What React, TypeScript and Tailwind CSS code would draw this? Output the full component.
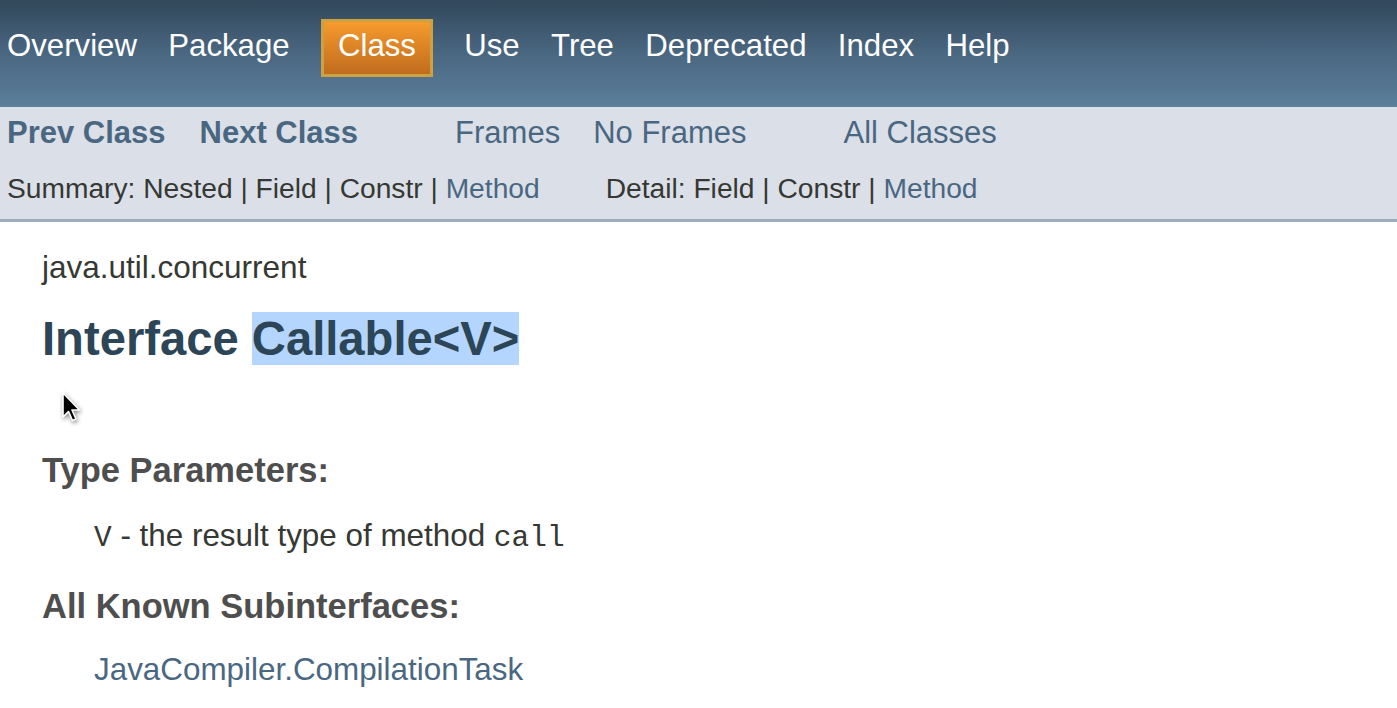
const TOP_NAV = ["Overview", "Package", "Class", "Use", "Tree", "Deprecated", "Index", "Help"];

const mono = { fontFamily: '"Liberation Mono", "DejaVu Sans Mono", monospace' };

function Cursor() {
  return (
    <svg
      className="absolute left-[60px] top-[390px]"
      width="24"
      height="34"
      viewBox="0 0 24 34"
      style={{ filter: "drop-shadow(1px 2px 2px rgba(0,0,0,0.45))" }}
    >
      <path
        d="M3 3 L3 27 L8.5 21.5 L12.5 30.5 L16 29 L12 20 L19.5 20 Z"
        fill="#000"
        stroke="#fff"
        strokeWidth="1.6"
        strokeLinejoin="round"
      />
    </svg>
  );
}

function TopNav() {
  return (
    <div className="h-[107px] bg-gradient-to-b from-[#32485b] via-[#4a6781] to-[#5b7f9b]">
      <ul className="flex items-start gap-[31.3px] pl-[7px] pt-[22px] text-[31.2px] leading-[48px] text-white">
        {TOP_NAV.map((item) =>
          item === "Class" ? (
            <li
              key={item}
              className="-mt-[3px] border-[3px] border-[#cda140] bg-gradient-to-b from-[#f69b2d] to-[#c06c1f] px-[14px] pb-[4px]"
            >
              {item}
            </li>
          ) : (
            <li key={item}>{item}</li>
          )
        )}
      </ul>
    </div>
  );
}

function SubNav() {
  return (
    <div className="border-b-[3px] border-[#9eaabd] bg-[#dbe0e8] pb-[2px] pl-[7px]">
      <div className="flex h-[52px] items-center text-[31px] text-[#4a6782]">
        <div className="flex gap-[34px] font-bold">
          <span>Prev Class</span>
          <span>Next Class</span>
        </div>
        <div className="ml-[97px] flex gap-[33px]">
          <span>Frames</span>
          <span>No Frames</span>
        </div>
        <span className="ml-[97px]">All Classes</span>
      </div>
      <div className="flex h-[58px] items-center text-[28.2px] text-[#353833] whitespace-pre">
        <span>
          Summary: Nested | Field | Constr | <span className="text-[#4a6782]">Method</span>
        </span>
        <span className="ml-[66px]">
          Detail: Field | Constr | <span className="text-[#4a6782]">Method</span>
        </span>
      </div>
    </div>
  );
}

export default function App() {
  return (
    <div
      className="relative h-[708px] w-[1397px] overflow-hidden bg-white"
      style={{ fontFamily: '"Liberation Sans", Arial, sans-serif' }}
    >
      <TopNav />
      <SubNav />

      <div className="pl-[42px] text-[#353833]">
        <div className="mt-[25px] text-[31.5px] leading-[40px]">java.util.concurrent</div>
        <h2 className="mt-[24px] text-[47.2px] font-bold leading-[56px] text-[#2c4557]">
          Interface <span className="bg-[#b4d5fe]">Callable&lt;V&gt;</span>
        </h2>

        <div className="mt-[83px] text-[34.5px] font-bold leading-[40px] text-[#4e4e4e]">Type Parameters:</div>
        <div className="mt-[26px] pl-[52px] text-[31.4px] leading-[40px]">
          <span className="text-[29.5px]" style={mono}>V</span> - the result type of method{" "}
          <span className="text-[29.5px]" style={mono}>call</span>
        </div>

        <div className="mt-[28px] text-[34.5px] font-bold leading-[40px] text-[#4e4e4e]">All Known Subinterfaces:</div>
        <div className="mt-[24px] pl-[52px] text-[31.4px] leading-[40px] text-[#4a6782]">JavaCompiler.CompilationTask</div>
      </div>

      <Cursor />
    </div>
  );
}
